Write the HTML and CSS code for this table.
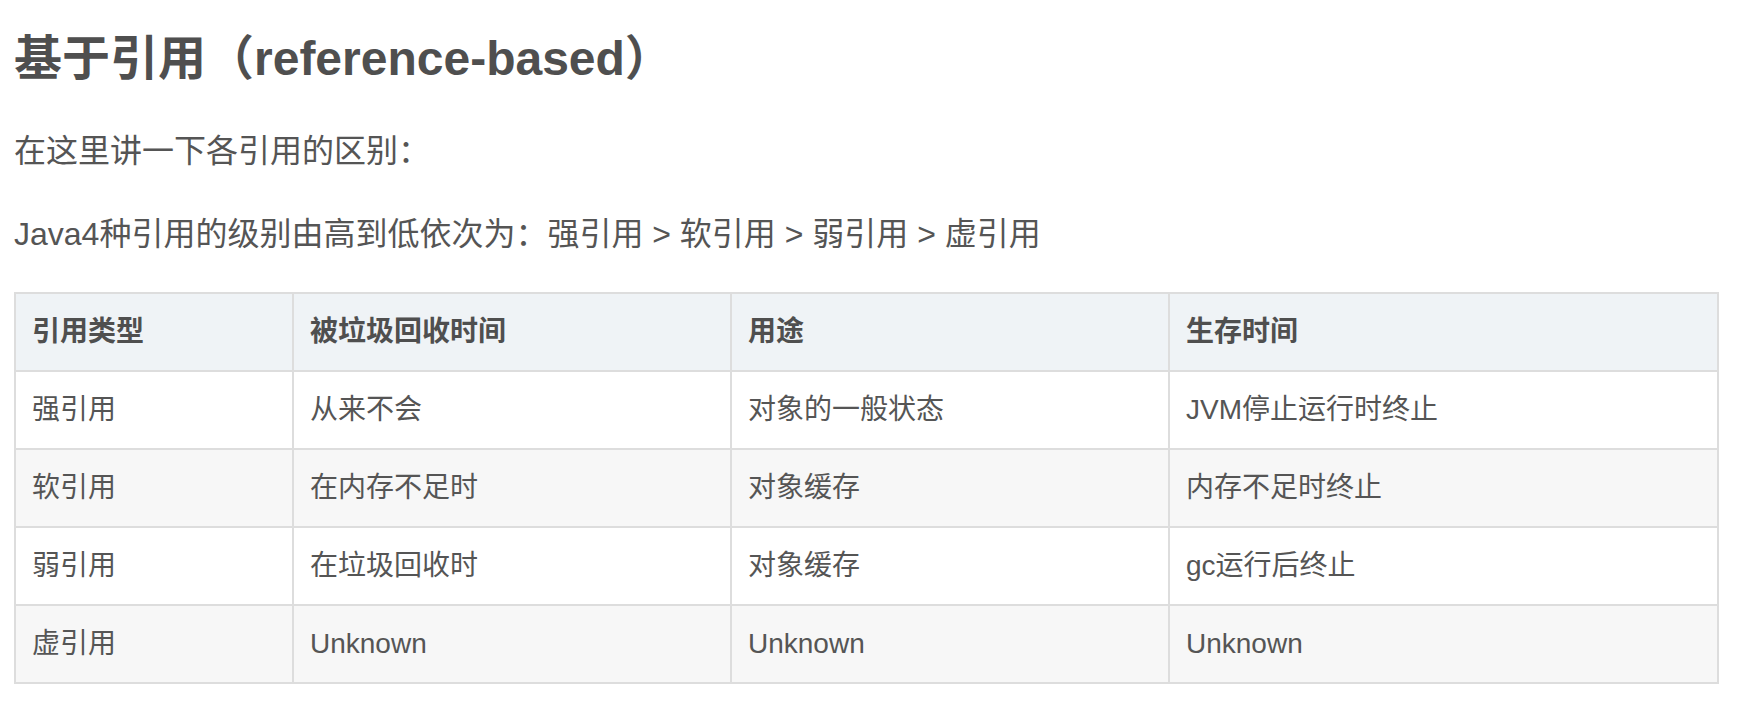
FILE: index.html
```html
<!DOCTYPE html>
<html lang="zh-CN">
<head>
<meta charset="utf-8">
<title>基于引用</title>
<link rel="stylesheet" href="styles.css">
</head>
<body>
<main class="article">
  <h2 class="title">基于引用（reference-based）</h2>
  <p class="text">在这里讲一下各引用的区别：</p>
  <p class="text">Java4种引用的级别由高到低依次为：强引用 &gt; 软引用 &gt; 弱引用 &gt; 虚引用</p>
  <table class="ref-table">
    <colgroup>
      <col class="c1"><col class="c2"><col class="c3"><col class="c4">
    </colgroup>
    <thead>
      <tr><th>引用类型</th><th>被垃圾回收时间</th><th>用途</th><th>生存时间</th></tr>
    </thead>
    <tbody>
      <tr><td>强引用</td><td>从来不会</td><td>对象的一般状态</td><td>JVM停止运行时终止</td></tr>
      <tr><td>软引用</td><td>在内存不足时</td><td>对象缓存</td><td>内存不足时终止</td></tr>
      <tr><td>弱引用</td><td>在垃圾回收时</td><td>对象缓存</td><td>gc运行后终止</td></tr>
      <tr><td>虚引用</td><td>Unknown</td><td>Unknown</td><td>Unknown</td></tr>
    </tbody>
  </table>
</main>
</body>
</html>
```

FILE: styles.css
```css
html, body {
  margin: 0;
  padding: 0;
  background: #ffffff;
}

body {
  font-family: "Liberation Sans", "Noto Sans CJK SC", sans-serif;
  color: #555555;
}

.article {
  padding: 29px 0 0 14px;
}

.title {
  margin: 0 0 37px 0;
  font-size: 48px;
  line-height: 60px;
  font-weight: bold;
  color: #4f4f4f;
}

.text {
  margin: 0 0 32px 0;
  font-size: 32px;
  line-height: 51px;
  color: #555555;
}

.ref-table {
  width: 1703px;
  table-layout: fixed;
  border-collapse: collapse;
  font-size: 28px;
  line-height: 30px;
  color: #555555;
}

.c1 { width: 278px; }
.c2 { width: 438px; }
.c3 { width: 438px; }
.c4 { width: 549px; }

.ref-table th,
.ref-table td {
  border: 2px solid #dddddd;
  padding: 23px 16px;
  text-align: left;
  vertical-align: middle;
}

.ref-table th {
  font-weight: bold;
  color: #4f4f4f;
  background: #eff3f6;
}

.ref-table tbody tr:nth-child(odd) td {
  background: #ffffff;
}

.ref-table tbody tr:nth-child(even) td {
  background: #f7f7f7;
}
```
